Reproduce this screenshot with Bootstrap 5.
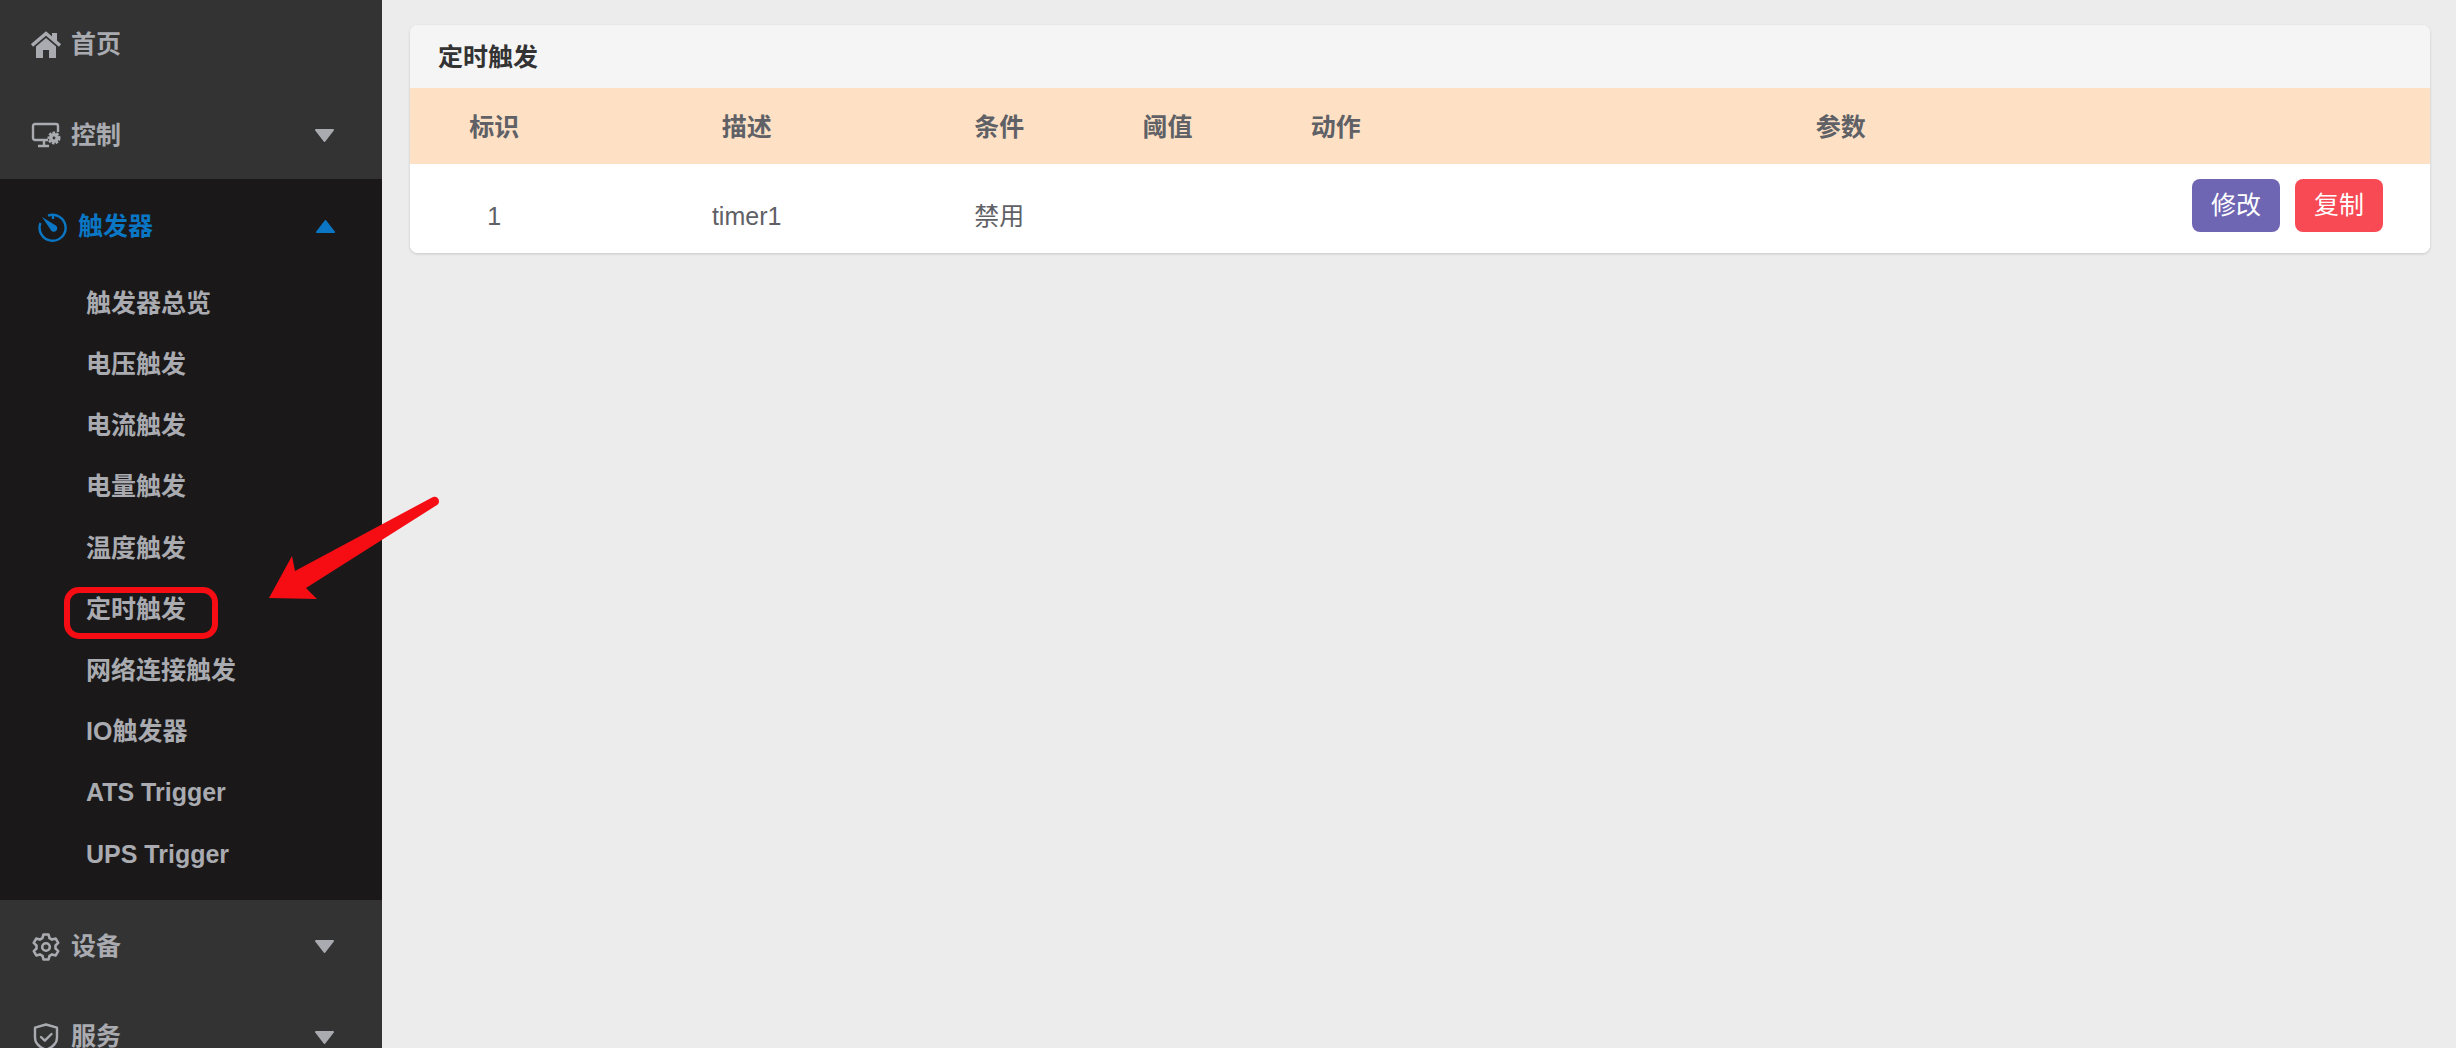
<!DOCTYPE html>
<html lang="zh-CN">
<head>
  <meta charset="UTF-8">
  <title>定时触发</title>
  <link href="https://cdn.jsdelivr.net/npm/bootstrap@5.3.0/dist/css/bootstrap.min.css" rel="stylesheet">
  <script src="https://cdn.jsdelivr.net/npm/bootstrap@5.3.0/dist/js/bootstrap.bundle.min.js"></script>
  <style>
    html, body { height: 100%; overflow: hidden; }
    body { background: #ececec; font-family: "Liberation Sans", "Noto Sans CJK SC", sans-serif; font-size: 25px; color: #5f6166; }
    .app-shell { height: 1048px; overflow: hidden; }
    .side-menu { width: 382px; flex: none; background: #333333; color: #a9abb0; font-weight: 700; height: 1083px; margin-top: -2px; }
    .menu-head { height: 91px; padding: 3px 48px 0 31px; gap: 10px; }
    .menu-head svg.ico { width: 30px; height: 30px; flex: none; }
    .menu-open { background: #1a1819; padding-bottom: 15px; }
    .menu-open .menu-head { color: #0a76c4; padding: 4px 47px 0 38px; margin-bottom: 3px; gap: 10px; }
    .sub-link { height: 61.2px; padding-left: 86px; }
    .caret-ico { width: 19px; height: 13px; flex: none; margin-left: auto; }
    .content-pane { padding: 25px 26px 0 28px; }
    .panel-card { border: 0; border-radius: 8px; overflow: hidden; box-shadow: 0 1px 3px rgba(0,0,0,.16); }
    .panel-title { height: 63px; padding: 3px 28px 0; background: #f5f5f5; color: #333; font-weight: 700; }
    .panel-cols { height: 76px; padding-top: 4px; background: #fee1c5; font-weight: 700; text-align: center; }
    .panel-row { height: 89px; background: #fff; text-align: center; }
    .row-text { padding-top: 16px; }
    .btn-cell { padding: 0 47px 6px 0; gap: 15px; }
    .act-btn { width: 88px; height: 53px; padding: 0; border: 0; border-radius: 8px; color: #fff; font-size: 25px; line-height: 53px; }
    .act-edit { background: #6f66b3; }
    .act-copy { background: #f74a55; }
    .note-layer { position: absolute; left: 0; top: 0; width: 2456px; height: 1048px; pointer-events: none; }
  </style>
</head>
<body>
  <div class="app-shell d-flex position-relative">
    <nav class="side-menu d-flex flex-column">
      <div class="menu-head d-flex align-items-center">
        <svg class="ico" viewBox="0 0 30 30" fill="currentColor"><path d="M21 3h5v8h-5z"/><path d="M1 15.500L15 3.500l14 12" fill="none" stroke="currentColor" stroke-width="3.400"/><path d="M5 16.500l10-8.500 10 8.500V28h-7v-8h-6v8H5z"/></svg>
        <span>首页</span>
      </div>
      <div class="menu-head d-flex align-items-center">
        <svg class="ico" viewBox="0 0 30 30" fill="none" stroke="currentColor" stroke-width="2.4"><path d="M17 20H4a2 2 0 0 1-2-2V6a2 2 0 0 1 2-2h21a2 2 0 0 1 2 2v6"/><path d="M13 20v5M7 26h11"/><circle cx="23" cy="18" r="5" fill="currentColor" stroke-dasharray="2.4 1.2" stroke-width="3"/><circle cx="23" cy="18" r="1.4" fill="#333" stroke="none"/></svg>
        <span>控制</span>
        <svg class="caret-ico" viewBox="0 0 19 13" fill="currentColor"><path d="M1 0h17a1 1 0 0 1 .8 1.6L10.3 12.5a1 1 0 0 1-1.6 0L.2 1.6A1 1 0 0 1 1 0z"/></svg>
      </div>
      <div class="menu-open">
        <div class="menu-head d-flex align-items-center">
          <svg class="ico" viewBox="0 0 30 30" fill="none" stroke="currentColor" stroke-width="2.4"><path d="M10 3.600A13 13 0 1 1 2.500 11"/><path d="M15 2.400V7"/><path d="M4 5l13 8a3.500 3.500 0 1 1-4.500 4.500z" fill="currentColor" stroke="none"/></svg>
          <span>触发器</span>
          <svg class="caret-ico" viewBox="0 0 19 13" fill="currentColor"><path d="M1 13h17a1 1 0 0 0 .8-1.6L10.3.5a1 1 0 0 0-1.6 0L.2 11.4A1 1 0 0 0 1 13z"/></svg>
        </div>
        <div class="sub-link d-flex align-items-center">触发器总览</div>
        <div class="sub-link d-flex align-items-center">电压触发</div>
        <div class="sub-link d-flex align-items-center">电流触发</div>
        <div class="sub-link d-flex align-items-center">电量触发</div>
        <div class="sub-link d-flex align-items-center">温度触发</div>
        <div class="sub-link d-flex align-items-center">定时触发</div>
        <div class="sub-link d-flex align-items-center">网络连接触发</div>
        <div class="sub-link d-flex align-items-center">IO触发器</div>
        <div class="sub-link d-flex align-items-center">ATS Trigger</div>
        <div class="sub-link d-flex align-items-center">UPS Trigger</div>
      </div>
      <div class="menu-head d-flex align-items-center">
        <svg class="ico" viewBox="0 0 30 30" fill="none" stroke="currentColor" stroke-width="2.6" stroke-linejoin="round"><path d="M12.5 2.500h5l1 3.600 2.600 1.500 3.600-1 2.500 4.300-2.700 2.600v3l2.700 2.600-2.500 4.300-3.600-1-2.600 1.500-1 3.600h-5l-1-3.600-2.600-1.500-3.600 1-2.500-4.300 2.700-2.600v-3L2.700 10.900l2.500-4.300 3.600 1 2.600-1.500z"/><circle cx="15" cy="15" r="3.800"/></svg>
        <span>设备</span>
        <svg class="caret-ico" viewBox="0 0 19 13" fill="currentColor"><path d="M1 0h17a1 1 0 0 1 .8 1.600L10.300 12.500a1 1 0 0 1-1.600 0L.2 1.600A1 1 0 0 1 1 0z"/></svg>
      </div>
      <div class="menu-head d-flex align-items-center">
        <svg class="ico" viewBox="0 0 30 30" fill="none" stroke="currentColor" stroke-width="2.4" stroke-linejoin="round" stroke-linecap="round"><path d="M15 2.500l11 3.200v9.800c0 6-5 10-11 12.300C9 25.500 4 21.500 4 15.500V5.700z"/><path d="M10 15l3.800 3.600L20.500 12"/></svg>
        <span>服务</span>
        <svg class="caret-ico" viewBox="0 0 19 13" fill="currentColor"><path d="M1 0h17a1 1 0 0 1 .8 1.600L10.300 12.500a1 1 0 0 1-1.600 0L.2 1.600A1 1 0 0 1 1 0z"/></svg>
      </div>
    </nav>

    <main class="content-pane flex-grow-1">
      <div class="card panel-card">
        <div class="panel-title d-flex align-items-center">定时触发</div>
        <div class="row g-0 panel-cols align-items-center">
          <div class="col-1">标识</div>
          <div class="col-2">描述</div>
          <div class="col-1">条件</div>
          <div class="col-1">阈值</div>
          <div class="col-1">动作</div>
          <div class="col-5">参数</div>
          <div class="col-1"></div>
        </div>
        <div class="row g-0 panel-row align-items-center">
          <div class="col-1 row-text">1</div>
          <div class="col-2 row-text">timer1</div>
          <div class="col-1 row-text">禁用</div>
          <div class="col-1"></div>
          <div class="col-1"></div>
          <div class="col-3"></div>
          <div class="col-3 d-flex justify-content-end btn-cell">
            <button type="button" class="btn act-btn act-edit">修改</button>
            <button type="button" class="btn act-btn act-copy">复制</button>
          </div>
        </div>
      </div>
    </main>

    <!-- red annotation drawn over the screenshot -->
    <svg class="note-layer" viewBox="0 0 2456 1048">
      <rect x="67" y="590" width="148" height="46" rx="12" fill="none" stroke="#f60d14" stroke-width="6"/>
      <path d="M432 497.500a4.500 4.500 0 0 1 5 7.500L306 588l11 11-48-1 23-42 3 15z" fill="#f60d14"/>
    </svg>
  </div>
</body>
</html>
